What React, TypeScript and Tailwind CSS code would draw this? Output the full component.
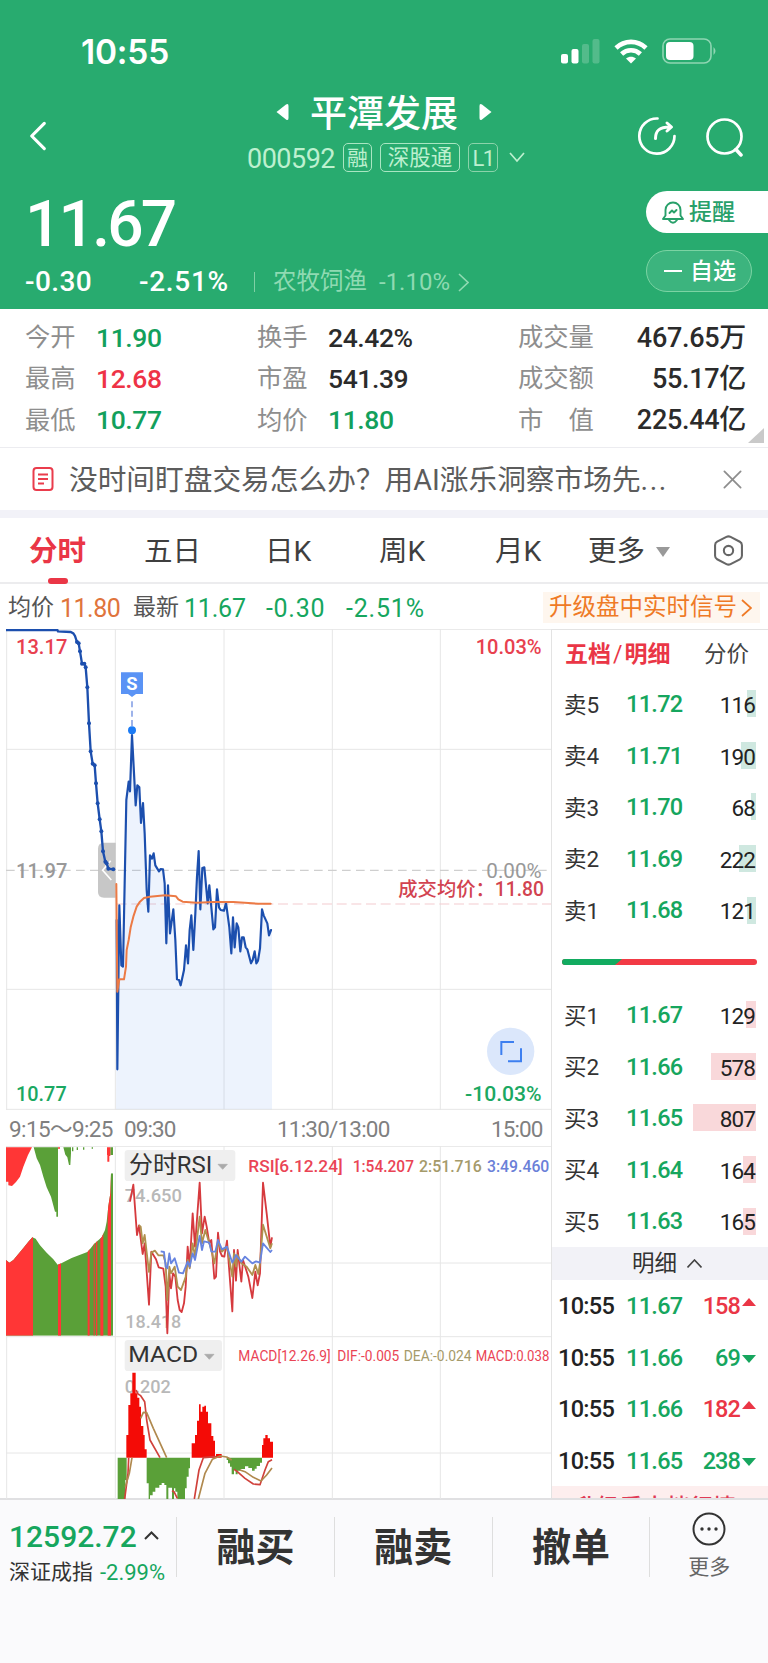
import React from 'react';
import { ChevronLeft, X } from 'lucide-react';

const stats = [
  [
    { label: '今开', value: '11.90', color: 'text-[#12a05c]' },
    { label: '最高', value: '12.68', color: 'text-[#ee3346]' },
    { label: '最低', value: '10.77', color: 'text-[#12a05c]' },
  ],
  [
    { label: '换手', value: '24.42%', color: 'text-[#2b2b2b]' },
    { label: '市盈', value: '541.39', color: 'text-[#2b2b2b]' },
    { label: '均价', value: '11.80', color: 'text-[#12a05c]' },
  ],
  [
    { label: '成交量', value: '467.65万', color: 'text-[#2b2b2b]' },
    { label: '成交额', value: '55.17亿', color: 'text-[#2b2b2b]' },
    { label: '市　值', value: '225.44亿', color: 'text-[#2b2b2b]' },
  ],
];

const sells = [
  { label: '卖5', price: '11.72', amount: 116, bar: 9 },
  { label: '卖4', price: '11.71', amount: 190, bar: 15 },
  { label: '卖3', price: '11.70', amount: 68, bar: 5 },
  { label: '卖2', price: '11.69', amount: 222, bar: 17 },
  { label: '卖1', price: '11.68', amount: 121, bar: 9 },
];

const buys = [
  { label: '买1', price: '11.67', amount: 129, bar: 10 },
  { label: '买2', price: '11.66', amount: 578, bar: 45 },
  { label: '买3', price: '11.65', amount: 807, bar: 63 },
  { label: '买4', price: '11.64', amount: 164, bar: 13 },
  { label: '买5', price: '11.63', amount: 165, bar: 13 },
];

const ticks = [
  { time: '10:55', price: '11.67', amount: 158, up: true },
  { time: '10:55', price: '11.66', amount: 69, up: false },
  { time: '10:55', price: '11.66', amount: 182, up: true },
  { time: '10:55', price: '11.65', amount: 238, up: false },
];

const auction: [number, number][] = [
  [18, 30], [172, 30], [174, 34], [212, 36], [220, 40], [225, 48], [231, 66], [236, 70], [240, 94], [246, 131],
  [253, 131], [257, 142], [262, 202], [267, 310], [272, 394], [278, 431], [284, 436], [288, 490], [293, 550],
  [299, 598], [304, 634], [309, 694], [316, 725], [320, 730], [325, 746], [340, 748],
];

const pricePath =
  'L352 1348 L358 856 L364 1036 L369 1040 L374 790 L379 540 L386 485 L390 514 L396 345 L401 440 L407 556 L412 496 L418 502 L423 609 L429 549 L434 640 L440 810 L445 875 L450 706 L456 716 L461 700 L466 736 L477 754 L482 747 L489 748 L494 790 L499 970 L504 796 L510 940 L520 868 L526 960 L531 1078 L537 1080 L542 1096 L552 1050 L558 976 L564 1030 L569 930 L574 886 L580 990 L586 880 L591 770 L596 693 L601 868 L607 744 L613 742 L623 850 L628 796 L640 928 L645 922 L651 808 L657 862 L662 870 L672 872 L678 848 L688 922 L694 1000 L699 892 L704 982 L710 910 L715 922 L721 994 L726 952 L731 952 L737 982 L742 988 L753 1030 L758 1020 L764 994 L769 1030 L774 1022 L780 985 L786 868 L791 886 L802 910 L807 946 L813 930';

const columns = [346, 672, 997, 1321];

function Label({ x, y, width, fill, children }: { x: number; y: number; width: number; fill: string; children: string }) {
  return <text x={x} y={y} fill={fill} textLength={width} lengthAdjust="spacingAndGlyphs">{children}</text>;
}

function StatusBar() {
  return (
    <div className="flex h-[84px] items-start justify-between pt-[34px] pr-[50px] pl-[81px]">
      <span className="font-['Inter'] text-[33.500px] leading-[36px] font-semibold tracking-[-0.200px]">10:55</span>
      <div className="flex h-[34px] items-center gap-[14px]">
        <svg width="39" height="25" viewBox="0 0 39 25" fill="white">
          <rect x="0" y="15" width="7" height="9.500" rx="2" />
          <rect x="10.500" y="10" width="7" height="14.500" rx="2" />
          <rect x="21" y="5" width="7" height="19.500" rx="2" opacity=".2" />
          <rect x="31.500" y="0" width="7" height="24.500" rx="2" opacity=".2" />
        </svg>
        <svg width="34" height="25" viewBox="0 0 34 25" fill="none" stroke="white" strokeWidth="4.600">
          <path d="M2 9 C10.500 .8 23.500 .8 32 9" />
          <path d="M7.600 15 C13 10 21 10 26.400 15" />
          <path d="M17 24.500 L12 19.500 C15 17 19 17 22 19.500 Z" fill="white" stroke="none" />
        </svg>
        <svg width="56" height="26" viewBox="0 0 56 26">
          <rect x="1" y="1" width="48" height="24" rx="7" fill="none" stroke="#8fd6b3" strokeWidth="1.600" />
          <rect x="4" y="4" width="27.500" height="18" rx="4" fill="white" />
          <path d="M51.500 9 Q55.500 13 51.500 17 Z" fill="#8fd6b3" />
        </svg>
      </div>
    </div>
  );
}

function Header() {
  return (
    <header className="h-[309px] bg-[#28ab6f] text-white">
      <StatusBar />

      <div className="flex h-[96px] items-start justify-between">
        <div className="w-[230px] pt-[31px] pl-[17px]">
          <ChevronLeft size={42} strokeWidth={1.5} viewBox="3 2 18 20" />
        </div>
        <div className="flex flex-col items-center pt-[6px]">
          <div className="flex h-[44px] items-center gap-[21px]">
            <svg width="13" height="18" viewBox="0 0 13 18" fill="white"><path d="M0.500 9 L10 1.500 Q12.500 0 12.500 3 V15 Q12.500 18 10 16.500 Z" /></svg>
            <h1 className="pt-[4px] text-[37px] leading-none font-medium">平潭发展</h1>
            <svg width="13" height="18" viewBox="0 0 13 18" fill="white"><path d="M12.500 9 L3 1.500 Q.5 0 .5 3 V15 Q.5 18 3 16.500 Z" /></svg>
          </div>
          <div className="mt-[8px] flex items-center gap-[8px] pl-[4px] text-[#bdf0cf]">
            <span className="pt-[4px] text-[27px] leading-none tracking-[-0.500px]">000592</span>
            <span className="flex h-[29px] w-[29px] items-center justify-center rounded-[5px] border border-[#a9e6c2] pt-[1px] text-[21px] leading-none">融</span>
            <span className="flex h-[29px] w-[80px] items-center justify-center rounded-[5px] border border-[#a9e6c2] pt-[1px] text-[21.500px] leading-none">深股通</span>
            <span className="flex h-[29px] w-[30px] items-center justify-center rounded-[5px] border border-[#8bd3aa] pt-[2px] text-[22px] leading-none tracking-[-1.500px]">L1</span>
            <svg className="ml-[3px]" width="16" height="11" viewBox="0 0 16 11" fill="none" stroke="currentColor" strokeWidth="1.700"><path d="M1 1 L8 9 L15 1" /></svg>
          </div>
        </div>
        <div className="flex w-[230px] justify-end gap-[29px] pt-[33px] pr-[24px]">
          <svg width="40" height="40" viewBox="0 0 40 40" fill="none" stroke="white" strokeWidth="2.700" strokeLinecap="round" strokeLinejoin="round">
            <path d="M20.500 1.500 A17.600 17.600 0 1 0 37.500 19" />
            <path d="M18.500 21.500 C18.500 14 22 10 32.500 10 M30 6 L34.500 10 L30 14" strokeWidth="3" />
          </svg>
          <svg width="38" height="40" viewBox="0 0 38 40" fill="none" stroke="white" strokeWidth="2.700" strokeLinecap="round">
            <circle cx="18.500" cy="19.500" r="17" />
            <path d="M30 32.500 L35 38" strokeWidth="3.500" />
          </svg>
        </div>
      </div>

      <div className="flex justify-between">
        <div className="pl-[25px]">
          <div className="pt-[11px] text-[64px] leading-[68px] font-medium tracking-[-2.800px]">11.67</div>
          <div className="mt-[6px] flex h-[34px] items-center whitespace-nowrap">
            <span className="w-[114px] text-[28px] font-medium tracking-[0.400px]">-0.30</span>
            <span className="w-[115px] text-[28px] font-medium tracking-[0.700px]">-2.51%</span>
            <span className="mr-[18px] h-[20px] w-px bg-[#7fd0a5]" />
            <span className="text-[23.500px] text-[#8fdab2]">农牧饲渔</span>
            <span className="ml-[12px] text-[24px] text-[#8fdab2]">-1.10%</span>
            <svg className="ml-[8px]" width="11" height="19" viewBox="0 0 11 19" fill="none" stroke="#8fdab2" strokeWidth="1.600"><path d="M1 1 L10 9.500 L1 18" /></svg>
          </div>
        </div>
        <div className="flex w-[122px] flex-col gap-[17px] pt-[11px]">
          <button className="flex h-[42px] items-center rounded-l-full bg-white pl-[16px] text-[23px] leading-none font-medium text-[#28a06a]">
            <svg className="mr-[5px]" width="22" height="23" viewBox="0 0 22 23" fill="none" stroke="currentColor" strokeWidth="1.900" strokeLinejoin="round" strokeLinecap="round">
              <path d="M1 18 H21 L18.500 14.500 V9 A7.500 7.500 0 0 0 3.500 9 V14.500 Z" />
              <path d="M7 19 Q11 24.500 15 19" />
              <path d="M7.500 12 L10 9.500 L12 11.500 L14.500 9" />
            </svg>
            <span className="pt-[1px]">提醒</span>
          </button>
          <button className="flex h-[42px] w-[106px] items-center rounded-full border border-[#7bd3a3] bg-[#3cb47e] pl-[17px] text-[23px] leading-none font-medium">
            <span className="mr-[8px] h-[2px] w-[18px] bg-white" />
            <span>自选</span>
          </button>
        </div>
      </div>
    </header>
  );
}

function Stats() {
  return (
    <section className="relative flex h-[139px] border-b border-[#ececf0] pt-[8px] pr-[22px] pl-[25px]">
      {stats.map((col, i) => (
        <div key={i} className={i === 2 ? 'w-[228px]' : i === 1 ? 'w-[261px]' : 'w-[232px]'}>
          {col.map(item => (
            <div key={item.label} className="flex h-[41.300px] items-center leading-none">
              <span className={`text-[25.300px] text-[#8e8e8e] ${i === 2 ? 'flex-1' : 'w-[71px]'}`}>{item.label}</span>
              <span className={`pt-[1px] font-medium ${i === 2 ? 'text-[27px] tracking-[-0.300px]' : 'text-[26.500px] tracking-[-0.400px]'} ${item.color}`}>{item.value}</span>
            </div>
          ))}
        </div>
      ))}
      <svg className="absolute right-[4px] bottom-[4px]" width="16" height="15" viewBox="0 0 16 15" fill="#c9c9c9"><path d="M16 0 V15 H0 Z" /></svg>
    </section>
  );
}

function Notice() {
  return (
    <section className="flex h-[70px] items-center border-b-[8px] border-[#f2f2f8] pr-[24px] pl-[32px]">
      <svg width="22" height="24" viewBox="0 0 22 24" fill="none" stroke="#ea3c4c" strokeWidth="2">
        <rect x="1.500" y="1" width="19" height="22" rx="3" />
        <path d="M6 7.500 H16 M6 12 H16 M6 16.500 H12" />
      </svg>
      <p className="ml-[15px] flex-1 pt-[3px] text-[28.700px] leading-none whitespace-nowrap text-[#5c5c5c]">
        没时间盯盘交易怎么办？用AI涨乐洞察市场先<span className="tracking-[1.500px]">...</span>
      </p>
      <X size={23} strokeWidth={1.300} viewBox="3.500 3.500 17 17" className="text-[#8d8d8d]" />
    </section>
  );
}

function Tabs() {
  return (
    <nav className="flex h-[66px] items-center border-b-2 border-[#ececee] pl-[29px] text-[28.500px] leading-none text-[#3f3f3f]">
      <div className="relative w-[115px] pt-[5px] font-bold text-[#ea3646]">
        分时
        <span className="absolute bottom-[-17px] left-[19px] h-[6px] w-[20px] rounded-[3px] bg-[#ea3646]" />
      </div>
      <span className="w-[121px] pt-[5px]">五日</span>
      <span className="w-[114px] pt-[5px]">日K</span>
      <span className="w-[116px] pt-[5px]">周K</span>
      <span className="w-[93px] pt-[5px]">月K</span>
      <span className="w-[68px] pt-[5px]">更多</span>
      <svg className="mt-[3px]" width="14" height="10" viewBox="0 0 14 10" fill="#999"><path d="M0 0 H14 L7 10 Z" /></svg>
      <svg className="ml-[44px]" width="29" height="31" viewBox="0 0 28 30" fill="none" stroke="#666" strokeWidth="2" strokeLinejoin="round">
        <path d="M12 1.800 Q14 .8 16 1.800 L25 6.500 Q27 7.600 27 9.800 V20.200 Q27 22.400 25 23.500 L16 28.200 Q14 29.200 12 28.200 L3 23.500 Q1 22.400 1 20.200 V9.800 Q1 7.600 3 6.500 Z" />
        <circle cx="14" cy="15" r="4.500" />
      </svg>
    </nav>
  );
}

function InfoRow() {
  return (
    <div className="flex h-[45px] items-center pt-[2px] pr-[8px] pl-[8px] text-[25px] leading-none whitespace-nowrap">
      <span className="w-[52px] text-[23px] text-[#555]">均价</span>
      <span className="w-[73px] pt-[1px] tracking-[-0.500px] text-[#e0743c]">11.80</span>
      <span className="w-[51px] text-[23px] text-[#555]">最新</span>
      <span className="w-[82px] pt-[1px] tracking-[-0.200px] text-[#16a65e]">11.67</span>
      <span className="w-[80px] pt-[1px] tracking-[0.700px] text-[#16a65e]">-0.30</span>
      <span className="flex-1 pt-[1px] tracking-[0.800px] text-[#16a65e]">-2.51%</span>
      <span className="flex h-[31px] w-[217px] items-center bg-[#fef6ee] pl-[6px] text-[23.500px] text-[#ef7a26]">
        升级盘中实时信号
        <svg className="ml-[4px]" width="11" height="18" viewBox="0 0 11 18" fill="none" stroke="currentColor" strokeWidth="1.700"><path d="M1 1 L10 9 L1 17" /></svg>
      </span>
    </div>
  );
}

// Drawn at three units to the pixel
function PriceChart() {
  return (
    <svg width="551" height="481" viewBox="0 27 1653 1443" className="block font-['Roboto','Noto_Sans_CJK_SC',sans-serif]" fontSize="63" fontWeight="500">
      <g stroke="#e6e6e6" strokeWidth="3" fill="none">
        <path d="M18 28 H1653 M18 388 H1653 M18 1108 H1653 M18 1468 H1653 M20 27 V1470" />
        {columns.map(x => <path key={x} d={`M${x} 27 V1470`} />)}
      </g>
      <path d="M18 751 H1653" stroke="#cfcfcf" strokeWidth="3.500" strokeDasharray="26 16" />
      <path d="M350 852 H1653" stroke="#f3ccd0" strokeWidth="3.500" strokeDasharray="30 14" />
      <path d={`M350 900 ${pricePath} L816 930 V1468 H348 Z`} fill="#5b94f0" opacity=".11" />
      <path d="M347 668 H312 Q294 668 294 686 V816 Q294 833 312 833 H347 Z" fill="#b9b9b9" opacity=".8" />
      <path d="M332 722 L308 751 L334 780" stroke="white" strokeWidth="5" fill="none" />
      <polyline points={auction.map(p => p.join(',')).join(' ')} fill="none" stroke="#1c4fae" strokeWidth="7" />
      {auction.slice(6).map(([x, y]) => <circle key={`${x}-${y}`} cx={x} cy={y} r="6" fill="#1c4fae" />)}
      <path d={`M350 900 ${pricePath}`} fill="none" stroke="#1c4fae" strokeWidth="6.500" strokeLinejoin="round" strokeLinecap="round" />
      <path d="M349 792 L350 900 L352 1115 L358 1078 H372 L378 1040 L380 990 L386 960 L392 922 L400 890 L410 860 L420 845 L432 834 L450 830 L495 826 L528 829 L535 838 L548 845 L590 848 L640 846 L700 846 L775 851 L812 851" fill="none" stroke="#ec7a45" strokeWidth="6" strokeLinejoin="round" strokeLinecap="round" />
      <path d="M396 318 V240" stroke="#6e8ee0" strokeWidth="4" strokeDasharray="18 10" />
      <circle cx="396" cy="331" r="12" fill="#1b7bf5" />
      <path d="M363 157 H429 V222 H408 L396 231 L384 222 H363 Z" fill="#5a93f5" />
      <text x="379" y="209" fill="white" fontSize="55" fontWeight="bold">S</text>
      <Label x={48} y={102} width={154} fill="#e8404f">13.17</Label>
      <Label x={48} y={774} width={154} fill="#999">11.97</Label>
      <Label x={48} y={1442} width={152} fill="#1ba862">10.77</Label>
      <Label x={1427} y={102} width={198} fill="#e8404f">10.03%</Label>
      <g fontWeight="400"><Label x={1459} y={773} width={166} fill="#999">0.00%</Label></g>
      <g fontSize="59"><Label x={1195} y={828} width={437} fill="#d24350">成交均价：11.80</Label></g>
      <Label x={1395} y={1442} width={230} fill="#1ba862">-10.03%</Label>
      <circle cx="1532" cy="1294" r="71" fill="#dbe7fb" />
      <path d="M1504 1305 V1266 H1542 M1563 1285 V1324 H1524" fill="none" stroke="#3d7ff0" strokeWidth="6" />
    </svg>
  );
}

function RsiChart() {
  return (
    <svg width="551" height="190" viewBox="0 138 1653 570" className="block font-['Roboto','Noto_Sans_CJK_SC',sans-serif]">
      <g stroke="#e6e6e6" strokeWidth="3" fill="none">
        <path d="M18 139 H1653 M346 489 H1653 M20 138 V708" />
        {columns.map(x => <path key={x} d={`M${x} 138 V708`} />)}
      </g>
      <path d="M18 142 V245 H25 V256 L36 258 L48 246 L60 230 L70 200 L84 165 L96 142 Z" fill="#ff3636" />
      <path d="M101 142 L110 175 L120 195 L130 230 L140 262 L153 290 L165 335 H169 V350 H174 V142 Z M190 142 L196 164 L202 172 L207 195 H211 L213 160 V142 Z M216 142 h4 v12 h-4 Z M230 142 h4 v8 h-4 Z M249 142 h4 v7 h-4 Z M275 142 h4 v4 h-4 Z M331 142 h8 v23 h-8 Z" fill="#5aa038" />
      <path d="M174 142 h6 v4 h-6 Z M321 142 h10 v26 h-3 v17 h-6 v-20 h-1 Z" fill="#ff3636" />
      <clipPath id="depth">
        <path d="M18 480 L28 488 L40 480 L55 462 L70 444 L85 425 L97 412 L107 416 L120 436 L140 458 L160 478 L173 494 L184 490 L215 474 L262 456 L272 445 L282 432 L305 412 L315 390 L320 365 L325 318 L331 280 L333 220 H339 V707 H18 Z" />
      </clipPath>
      <g clipPath="url(#depth)">
        <path d="M18 200 H339 V708 H18 Z" fill="#5aa038" />
        <path d="M18 200 H99 V708 H18 Z M174 200 h9 v508 h-9 Z M263 200 h6 v508 h-6 Z M281 200 h3 v508 h-3 Z M288 200 h4 v508 h-4 Z M301 200 h9 v508 h-9 Z M323 200 h10 v508 h-10 Z" fill="#ff3636" />
      </g>
      <rect x="374" y="150" width="332" height="93" rx="10" fill="#efefef" />
      <g fontSize="70"><Label x={387} y={219} width={250} fill="#333">分时RSI</Label></g>
      <path d="M654 193 H682 L668 208 Z" fill="#aaa" stroke="#aaa" strokeWidth="2" />
      <g fontSize="50" fontWeight="500">
        <Label x={745} y={217} width={283} fill="#ea4455">RSI[6.12.24]</Label>
        <Label x={1058} y={217} width={184} fill="#ea4455">1:54.207</Label>
        <Label x={1257} y={217} width={188} fill="#a59a6a">2:51.716</Label>
        <Label x={1461} y={217} width={187} fill="#6a80d8">3:49.460</Label>
      </g>
      <g fontSize="57" fontWeight="500">
        <Label x={374} y={306} width={172} fill="#b8b8b8">74.650</Label>
        <Label x={376} y={685} width={168} fill="#b8b8b8">18.418</Label>
      </g>
      <g fill="none" strokeWidth="5.500" strokeLinejoin="round">
        <path stroke="#d63a3e" d="M390 305 L400 254 L411 405 L417 376 L428 462 L434 430 L447 614 L454 455 L468 478 L476 502 L490 506 L497 560 L502 700 L508 520 L513 565 L519 520 L526 530 L533 600 L539 630 L545 636 L552 610 L557 560 L563 440 L569 500 L578 340 L585 440 L599 248 L606 400 L614 350 L620 380 L628 430 L634 420 L643 536 L648 530 L654 398 L660 455 L666 468 L673 470 L681 422 L697 634 L702 450 L708 542 L713 450 L724 545 L729 480 L745 530 L757 594 L766 515 L773 556 L780 520 L789 248 L800 340 L811 440 L816 412" />
        <path stroke="#b0904e" d="M417 376 L422 380 L428 430 L434 405 L447 516 L454 458 L465 452 L475 466 L490 466 L497 490 L502 600 L508 500 L513 520 L524 500 L533 560 L543 570 L552 545 L557 530 L563 480 L569 505 L578 430 L585 470 L599 350 L606 430 L616 390 L634 450 L643 490 L654 425 L666 455 L681 440 L697 530 L702 460 L708 500 L713 465 L724 490 L740 500 L757 525 L766 495 L775 522 L780 490 L789 374 L811 445 L816 430" />
        <path stroke="#6784e0" d="M482 454 L492 456 L497 500 L502 505 L508 460 L513 490 L524 475 L537 518 L549 520 L563 485 L569 500 L578 460 L585 480 L599 408 L606 450 L612 424 L628 428 L634 455 L646 455 L654 420 L666 448 L681 440 L697 488 L708 465 L724 485 L735 470 L757 490 L768 484 L780 488 L789 430 L811 456 L816 450" />
      </g>
    </svg>
  );
}

function MacdChart() {
  return (
    <svg width="551" height="163" viewBox="0 708 1653 489" className="block font-['Roboto','Noto_Sans_CJK_SC',sans-serif]">
      <g stroke="#e6e6e6" strokeWidth="3" fill="none">
        <path d="M18 710 H1653 M18 1059 H1653 M20 708 V1197" />
        {columns.map(x => <path key={x} d={`M${x} 708 V1197`} />)}
      </g>
      <rect x="374" y="720" width="292" height="93" rx="10" fill="#efefef" />
      <g fontSize="68"><Label x={385} y={787} width={210} fill="#333">MACD</Label></g>
      <path d="M614 763 H642 L628 778 Z" fill="#aaa" stroke="#aaa" strokeWidth="2" />
      <g fontSize="42">
        <Label x={715} y={783} width={277} fill="#ea4455">MACD[12.26.9]</Label>
        <Label x={1012} y={783} width={186} fill="#ea4455">DIF:-0.005</Label>
        <Label x={1211} y={783} width={204} fill="#a59a6a">DEA:-0.024</Label>
        <Label x={1427} y={783} width={221} fill="#ea4455">MACD:0.038</Label>
      </g>
      <g fontSize="57" fontWeight="500"><Label x={374} y={878} width={138} fill="#b8b8b8">0.202</Label></g>
      <path d="M379 1073 V1005 H385 V915 H391 V880 H397 V818 H407 V880 H412 V893 H418 V920 H423 V978 H430 V1005 H434 V1048 H440 V1073 Z M575 1073 V1030 H585 V1005 H591 V962 H597 V913 H602 V935 H607 V920 H613 V917 H618 V935 H624 V970 H634 V1008 H640 V1022 H645 V1073 Z M648 1073 V1062 H665 V1073 Z M786 1073 V1035 H790 V1015 H796 V1005 H803 V1015 H810 V1025 H819 V1073 Z" fill="#f40b06" />
      <path d="M353 1073 H380 V1140 H376 V1197 H353 Z M440 1073 H570 V1105 H566 V1130 H560 V1165 H555 V1197 H532 V1175 H526 V1165 H522 V1197 H516 V1163 H505 V1197 H499 V1155 H493 V1149 H485 V1155 H478 V1163 H466 V1175 H458 V1186 H450 V1197 H446 V1150 H440 Z M680 1073 H786 V1088 H780 V1098 H770 V1106 H764 V1112 H756 V1104 H745 V1099 H735 V1107 H722 V1112 H713 V1123 H707 V1110 H702 V1123 H695 V1100 H690 V1090 H684 V1080 H680 Z" fill="#5aa038" />
      <g fill="none" strokeWidth="5" strokeLinejoin="round">
        <path stroke="#d0413b" d="M374 1197 L384 1120 L386 1073 M408 870 L414 882 L422 887 L434 905 L440 960 L450 1020 L480 1073 M516 1172 L522 1175 L532 1195 M583 1197 L597 1110 L610 1073 L648 1070 M702 1108 L712 1115 L735 1135 L760 1152 L780 1154 L795 1110 L805 1085 L816 1079" />
        <path stroke="#b0894e" d="M376 1160 L388 1120 L396 1073 M422 955 L430 937 L440 938 L460 985 L485 1040 L500 1073 M595 1197 L615 1120 L637 1078 L660 1068 L680 1071 L695 1080 M720 1110 L735 1115 L760 1132 L783 1143 L800 1125 L816 1104" />
      </g>
    </svg>
  );
}

function DepthRow({ label, price, amount, bar, tint }: { label: string; price: string; amount: number; bar: number; tint: string }) {
  return (
    <div className="flex h-[51.600px] items-center pr-[12px] pl-[12px] text-[23.500px] leading-none">
      <span className="w-[62px] pt-[2px] text-[22.500px] text-[#333]">{label}</span>
      <span className="flex-1 pt-[2px] font-medium tracking-[-0.700px] text-[#16a65e]">{price}</span>
      <span className="relative flex h-[27px] items-center justify-end text-[#222]">
        <span className={`absolute inset-y-0 right-0 ${tint}`} style={{ width: bar }} />
        <span className="relative pt-[3px] pr-[1px] text-[22.500px] tracking-[-0.900px]">{amount}</span>
      </span>
    </div>
  );
}

function OrderBook() {
  return (
    <aside className="h-[869px] w-[217px] overflow-hidden border-t border-l border-[#e3e3e3]">
      <div className="flex h-[48px] items-center justify-between pr-[19px] pl-[13px] leading-none">
        <span className="text-[23px] font-bold text-[#ea3646]">五档<span className="px-[2px] font-normal">/</span>明细</span>
        <span className="text-[22.500px] text-[#444]">分价</span>
      </div>
      {sells.map(row => <DepthRow key={row.label} {...row} tint="bg-[#cfe8e0]" />)}
      <div className="flex h-[53px] items-center pl-[10px]">
        <svg width="195" height="6" viewBox="0 0 195 6">
          <rect width="195" height="6" rx="3" fill="#f23a45" />
          <path d="M3 0 H60 L53 6 H3 Q0 6 0 3 Q0 0 3 0 Z" fill="#12ab60" />
        </svg>
      </div>
      {buys.map(row => <DepthRow key={row.label} {...row} tint="bg-[#f9d8da]" />)}
      <div className="flex h-[33px] items-center justify-center gap-[10px] bg-[#f2f2f7] pl-[14px] text-[22.500px] leading-none text-[#333]">
        明细
        <svg width="15" height="9" viewBox="0 0 15 9" fill="none" stroke="#444" strokeWidth="1.600"><path d="M.5 8.500 L7.500 1 L14.500 8.500" /></svg>
      </div>
      {ticks.map((tick, i) => (
        <div key={i} className="flex h-[51.500px] items-center pt-[3px] pr-[12px] pl-[6px] text-[23.500px] leading-none">
          <span className="w-[68px] font-medium tracking-[-0.700px] text-[#222]">{tick.time}</span>
          <span className="flex-1 font-medium tracking-[-0.700px] text-[#16a65e]">{tick.price}</span>
          <span className={`font-medium tracking-[-0.900px] ${tick.up ? 'text-[#ea3646]' : 'text-[#16a65e]'}`}>{tick.amount}</span>
          <svg className={`ml-[2px] ${tick.up ? 'mb-[10px]' : ''}`} width="14" height="8" viewBox="0 0 14 8">
            {tick.up ? <path d="M0 8 H14 L7 0 Z" fill="#ea3646" /> : <path d="M0 0 H14 L7 8 Z" fill="#16a65e" />}
          </svg>
        </div>
      ))}
      <div className="h-[40px] bg-[#fdeeee] pt-[11px] pl-[21px] text-[23.300px] leading-none font-medium whitespace-nowrap text-[#e03a55]">升级看十档行情</div>
    </aside>
  );
}

function BottomBar() {
  return (
    <footer className="flex h-[165px] border-t-2 border-[#e0e0e2] bg-[#fafafc] pt-[17px]">
      <div className="h-[60px] w-[177px] border-r border-[#dedede] pl-[9px] whitespace-nowrap">
        <div className="flex h-[37px] items-center text-[30px] leading-none font-medium text-[#16a65e]">
          <span className="pt-[2px]">12592.72</span>
          <svg className="ml-[7px]" width="15" height="9" viewBox="0 0 15 9" fill="none" stroke="#333" strokeWidth="2"><path d="M1 8 L7.500 1.500 L14 8" /></svg>
        </div>
        <div className="flex h-[37px] items-center text-[21px] leading-none text-[#333]">
          深证成指<span className="ml-[7px] pt-[1px] text-[22px] text-[#16a65e]">-2.99%</span>
        </div>
      </div>
      {['融买', '融卖', '撤单'].map(action => (
        <button key={action} className="h-[60px] w-[157.800px] border-r border-[#dedede] pt-[2px] text-[39px] leading-none font-bold text-[#333]">
          {action}
        </button>
      ))}
      <div className="flex flex-1 flex-col items-center text-[21px] leading-none text-[#666]">
        <svg className="mt-[-5px] mb-[11px]" width="34" height="34" viewBox="0 0 34 34" fill="#333">
          <circle cx="17" cy="17" r="15.500" fill="none" stroke="#333" strokeWidth="2" />
          <circle cx="10" cy="17" r="1.700" />
          <circle cx="17" cy="17" r="1.700" />
          <circle cx="24" cy="17" r="1.700" />
        </svg>
        更多
      </div>
    </footer>
  );
}

export default function App() {
  return (
    <div className="h-[1663px] w-[768px] overflow-hidden bg-white font-['Roboto','Noto_Sans_CJK_SC',sans-serif]">
      <Header />
      <Stats />
      <Notice />
      <Tabs />
      <InfoRow />
      <div className="flex h-[869px]">
        <div className="w-[551px]">
          <PriceChart />
          <div className="flex h-[36px] items-center pt-[3px] pl-[9px] text-[22.500px] leading-none whitespace-nowrap text-[#808080]">
            <span className="w-[115px] tracking-[-0.600px]">9:15～9:25</span>
            <span className="w-[153px] tracking-[-0.900px]">09:30</span>
            <span className="w-[214px] tracking-[-0.800px]">11:30/13:00</span>
            <span className="tracking-[-0.900px]">15:00</span>
          </div>
          <RsiChart />
          <MacdChart />
        </div>
        <OrderBook />
      </div>
      <BottomBar />
    </div>
  );
}
